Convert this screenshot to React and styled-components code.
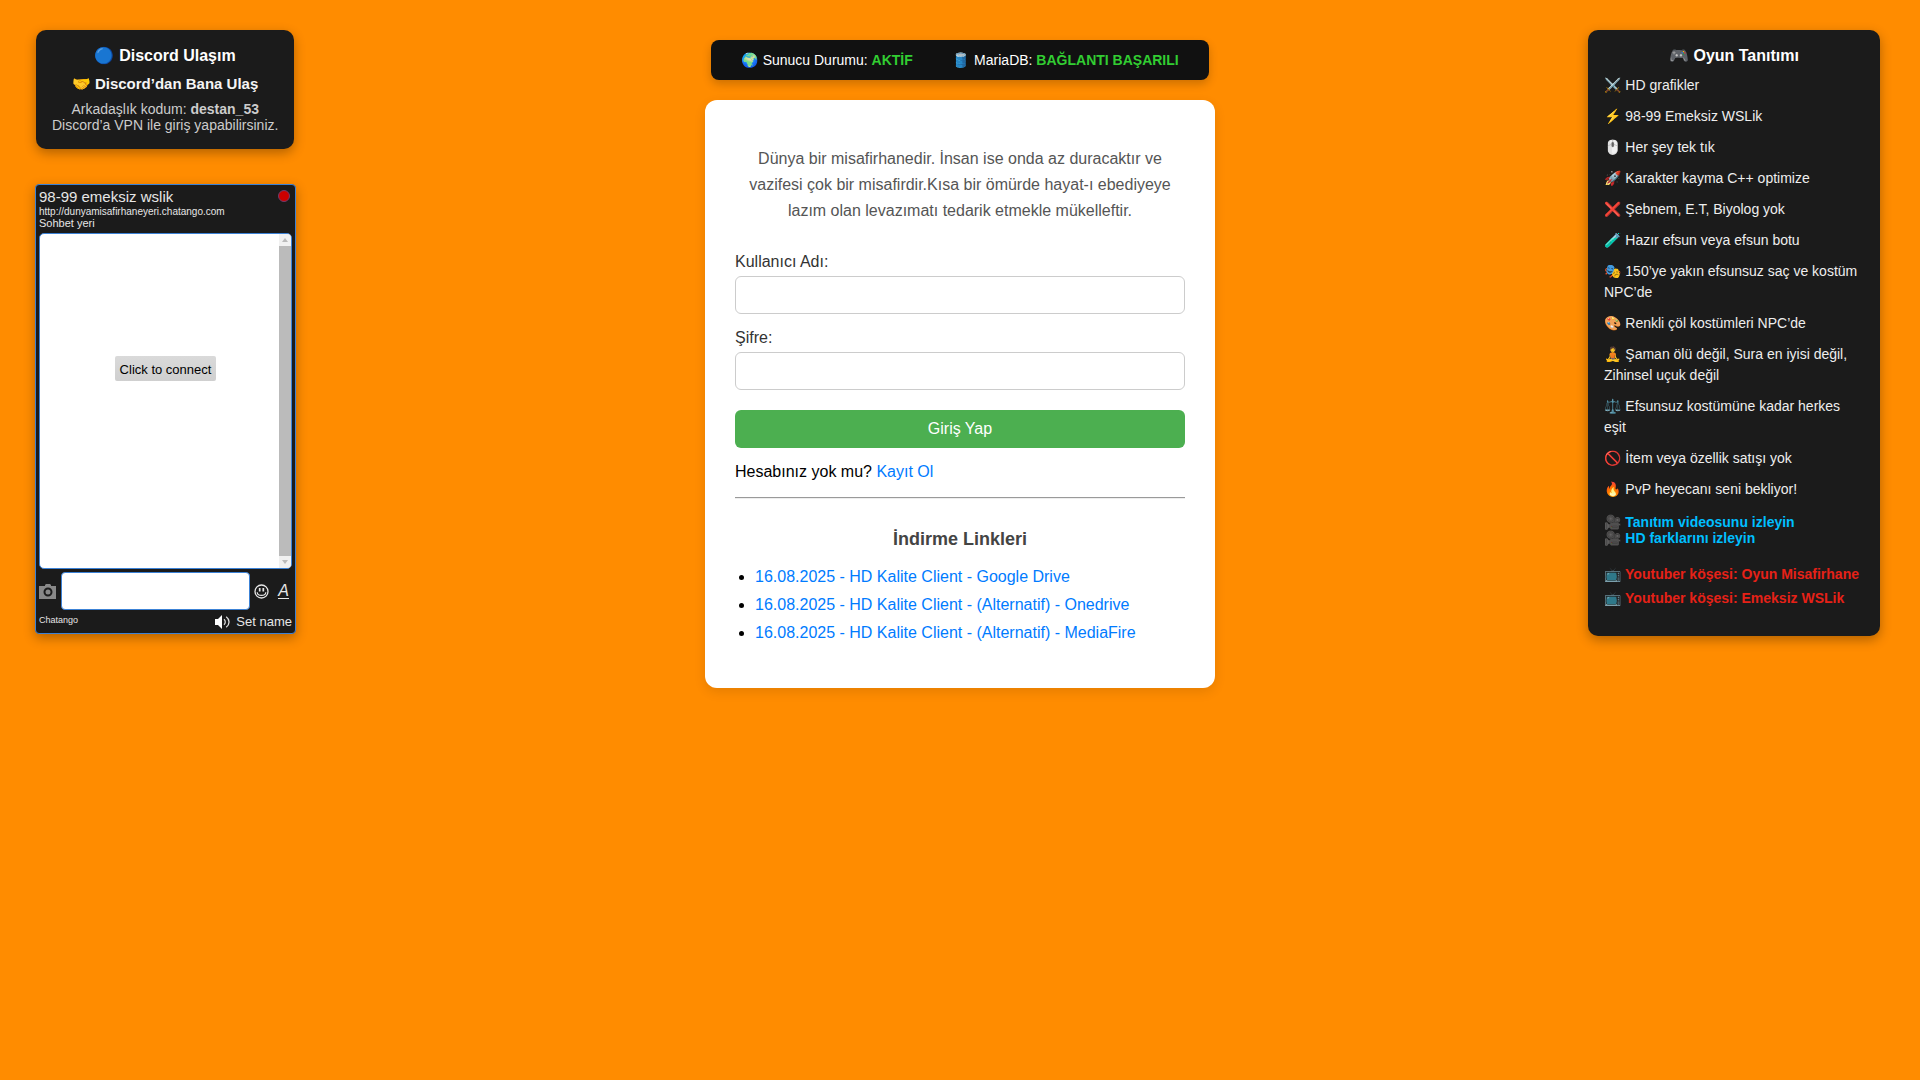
import React from 'react';
import styled, { createGlobalStyle } from 'styled-components';

const GlobalStyle = createGlobalStyle`
  *, *::before, *::after { box-sizing: border-box; }
  body {
    margin: 0;
    background: #ff8c00;
    color: #000;
    font-family: Arial, "Liberation Sans", "Noto Color Emoji", sans-serif;
    font-size: 16px;
    line-height: 18px;
  }
  h1, h2, h3, p, ul { margin: 0; padding: 0; }
  button, input { font-family: inherit; }
`;

const Page = styled.div`
  display: grid;
  grid-template-columns: 1fr 510px 1fr;
  align-items: start;
  min-height: 100vh;
  padding: 30px 35px;
`;

const LeftColumn = styled.aside`
  display: flex;
  flex-direction: column;
  align-items: flex-start;
  gap: 35px;
`;

const Panel = styled.section`
  padding: 16px;
  border-radius: 10px;
  background: #1b1b1b;
  color: #fff;
  font-size: 14px;
  line-height: 16px;
  box-shadow: 0 4px 12px rgba(0, 0, 0, 0.3);
`;

const PanelTitle = styled.h2`
  margin-bottom: 9px;
  font-size: 16px;
  line-height: 20px;
  text-align: center;
`;

const DiscordPanel = styled(Panel)`
  margin-left: 1px;
  text-align: center;
`;

const PanelSubtitle = styled.h3`
  margin-bottom: 9px;
  color: #f5f5f5;
  font-size: 15px;
  line-height: 17px;
`;

const DiscordText = styled.p`
  color: #ccc;
`;

const GamePanel = styled(Panel)`
  justify-self: end;
  width: 292px;
  margin-right: 5px;
  padding-bottom: 30px;
`;

const FeatureList = styled.ul`
  display: flex;
  flex-direction: column;
  gap: 10px;
  margin-bottom: 14px;
  list-style: none;
  color: #eee;
  line-height: 21px;
`;

const LinkGroup = styled.div`
  display: flex;
  flex-direction: column;
  align-items: flex-start;
  gap: ${({ $gap }) => $gap}px;
  & + & { margin-top: 20px; }
`;

const PanelLink = styled.a`
  color: ${({ $color }) => $color};
  font-weight: bold;
  text-decoration: none;
`;

const Chat = styled.section`
  width: 261px;
  padding: 3px;
  border: 1px solid #3c82d6;
  border-radius: 4px;
  background: #1b1b1b;
  color: #e6e6e6;
  box-shadow: 0 4px 12px rgba(0, 0, 0, 0.3);
`;

const ChatHeader = styled.header`
  display: flex;
  justify-content: space-between;
  height: 45px;
`;

const ChatTitle = styled.h2`
  font-size: 15px;
  font-weight: normal;
  line-height: 18px;
`;

const ChatUrl = styled.a`
  display: block;
  color: inherit;
  font-size: 10px;
  line-height: 12px;
  text-decoration: none;
`;

const ChatNote = styled.p`
  font-size: 11px;
  line-height: 11px;
`;

const CloseButton = styled.button`
  width: 12px;
  height: 12px;
  margin-top: 2px;
  margin-right: 2px;
  padding: 0;
  border: 1px solid #6b3d6d;
  border-radius: 50%;
  background: #c00;
`;

const Messages = styled.div`
  display: grid;
  grid-template-columns: 12px 1fr 12px;
  justify-items: center;
  align-items: start;
  height: 336px;
  overflow: hidden;
  border: 1px solid #3c82d6;
  border-radius: 5px;
  background: #fff;
`;

const ConnectButton = styled.button`
  grid-column: 2;
  margin-top: 122px;
  padding: 5px 5px 3px;
  border: 0;
  border-radius: 2px;
  background: linear-gradient(#dadada, #cfcfcf);
  color: #000;
  font-size: 13px;
  line-height: 17px;
`;

const Scrollbar = styled.div`
  display: flex;
  flex-direction: column;
  justify-content: space-between;
  align-self: stretch;
  width: 12px;
  background: #bbb;
`;

const ScrollButton = styled.button`
  display: grid;
  place-items: center;
  width: 12px;
  height: 12px;
  padding: 0;
  border: 0;
  background: #f1f1f1;
`;

const ChatEntry = styled.div`
  display: flex;
  align-items: center;
  height: 38px;
  margin-top: 3px;
`;

const IconButton = styled.button`
  display: flex;
  flex: none;
  padding: 0;
  border: 0;
  background: none;
  color: #e6e6e6;
`;

const StyleButton = styled(IconButton)`
  border-bottom: 1px solid #e6e6e6;
  font-size: 16px;
  font-style: italic;
  line-height: 14px;
`;

const MessageInput = styled.input`
  flex: 1;
  min-width: 0;
  height: 38px;
  margin: 0 4px 0 5px;
  border: 1px solid #3c82d6;
  border-radius: 4px;
  background: #fff;
`;

const ChatTools = styled.div`
  display: flex;
  align-items: center;
  gap: 9px;
  padding-right: 3px;
`;

const ChatFooter = styled.footer`
  display: flex;
  justify-content: space-between;
  padding-top: 3px;
`;

const Brand = styled.a`
  padding-top: 1px;
  color: inherit;
  font-size: 9px;
  line-height: 12px;
  text-decoration: none;
`;

const FooterTools = styled.div`
  display: flex;
  align-items: center;
  gap: 5px;
`;

const NameButton = styled.button`
  padding: 0;
  border: 0;
  background: none;
  color: inherit;
  font-size: 13px;
  line-height: 17px;
`;

const Main = styled.main`
  display: flex;
  flex-direction: column;
  align-items: center;
  gap: 20px;
  padding-top: 10px;
`;

const StatusBar = styled.div`
  display: flex;
  gap: 40px;
  padding: 12px 30px;
  border-radius: 8px;
  background: #111;
  color: #fff;
  font-size: 14px;
  line-height: 16px;
  white-space: nowrap;
  box-shadow: 0 4px 10px rgba(0, 0, 0, 0.2);
`;

const StatusValue = styled.strong`
  color: #32cd32;
`;

const Card = styled.section`
  align-self: stretch;
  padding: 46px 30px;
  border-radius: 12px;
  background: #fff;
  box-shadow: 0 4px 12px rgba(0, 0, 0, 0.1);
`;

const Quote = styled.p`
  margin-bottom: 29px;
  color: #555;
  line-height: 26px;
  text-align: center;
`;

const Field = styled.div`
  margin-bottom: 15px;
`;

const Label = styled.label`
  display: block;
  margin-bottom: 5px;
  color: #333;
`;

const TextInput = styled.input`
  display: block;
  width: 100%;
  height: 38px;
  padding: 10px;
  border: 1px solid #ccc;
  border-radius: 6px;
  background: #fff;
  font-size: 16px;
`;

const SubmitButton = styled.button`
  display: block;
  width: 100%;
  margin-top: 20px;
  margin-bottom: 15px;
  padding: 10px;
  border: 0;
  border-radius: 6px;
  background: #4caf50;
  color: #fff;
  font-size: 16px;
  line-height: 18px;
`;

const TextLink = styled.a`
  color: #007bff;
  text-decoration: none;
`;

const Divider = styled.hr`
  margin: 16px 0 30px;
  border: 0;
  border-top: 1px solid #9a9a9a;
  border-bottom: 1px solid #eee;
`;

const DownloadTitle = styled.h3`
  margin-bottom: 19px;
  color: #444;
  font-size: 18px;
  line-height: 20px;
  text-align: center;
`;

const DownloadList = styled.ul`
  display: flex;
  flex-direction: column;
  gap: 10px;
  padding-left: 20px;
`;

const features = [
  '⚔️ HD grafikler',
  '⚡ 98-99 Emeksiz WSLik',
  '🖱️ Her şey tek tık',
  '🚀 Karakter kayma C++ optimize',
  '❌ Şebnem, E.T, Biyolog yok',
  '🧪 Hazır efsun veya efsun botu',
  '🎭 150’ye yakın efsunsuz saç ve kostüm NPC’de',
  '🎨 Renkli çöl kostümleri NPC’de',
  '🧘 Şaman ölü değil, Sura en iyisi değil, Zihinsel uçuk değil',
  '⚖️ Efsunsuz kostümüne kadar herkes eşit',
  '🚫 İtem veya özellik satışı yok',
  '🔥 PvP heyecanı seni bekliyor!',
];

const videos = ['🎥 Tanıtım videosunu izleyin', '🎥 HD farklarını izleyin'];
const channels = ['📺 Youtuber köşesi: Oyun Misafirhane', '📺 Youtuber köşesi: Emeksiz WSLik'];

const downloads = [
  '16.08.2025 - HD Kalite Client - Google Drive',
  '16.08.2025 - HD Kalite Client - (Alternatif) - Onedrive',
  '16.08.2025 - HD Kalite Client - (Alternatif) - MediaFire',
];

const CameraIcon = () => (
  <svg width="17" height="15" viewBox="0 0 17 15" aria-hidden="true">
    <path d="M0 2h6V1l1-1h4l1 1v1h5v13H0z" fill="#888" />
    <circle cx="9" cy="8" r="3.5" fill="none" stroke="#1b1b1b" strokeWidth="2" />
  </svg>
);

const SmileIcon = () => (
  <svg width="15" height="15" viewBox="0 0 15 15" fill="none" stroke="currentColor" aria-hidden="true">
    <circle cx="7.5" cy="7.5" r="6.5" strokeWidth="1.3" />
    <path d="M5.7 4v3.6M9.3 4v3.6" strokeWidth="1.7" />
    <path d="M3.2 8.2c.3 4.3 8.3 4.3 8.6 0" strokeWidth="1.2" />
  </svg>
);

const SpeakerIcon = () => (
  <svg width="16" height="14" viewBox="0 0 16 14" aria-hidden="true">
    <path d="M0 4h3l4-4v14l-4-4H0z" fill="#fff" />
    <path d="M9 4.2c1.7 1.4 1.7 4.2 0 5.6M11.2 1.8c3.8 2.8 3.8 7.6 0 10.4" fill="none" stroke="#ddd" strokeWidth="1.3" />
  </svg>
);

const Arrow = ({ d }) => (
  <svg width="6" height="4" viewBox="0 0 6 4" aria-hidden="true">
    <path d={d} fill="#bbb" />
  </svg>
);

export default function App() {
  return (
    <>
      <GlobalStyle />
      <Page>
        <LeftColumn>
          <DiscordPanel>
            <PanelTitle>🔵 Discord Ulaşım</PanelTitle>
            <PanelSubtitle>🤝 Discord’dan Bana Ulaş</PanelSubtitle>
            <DiscordText>
              Arkadaşlık kodum: <strong>destan_53</strong>
              <br />
              Discord’a VPN ile giriş yapabilirsiniz.
            </DiscordText>
          </DiscordPanel>
          <Chat>
            <ChatHeader>
              <div>
                <ChatTitle>98-99 emeksiz wslik</ChatTitle>
                <ChatUrl href="#chat">http://dunyamisafirhaneyeri.chatango.com</ChatUrl>
                <ChatNote>Sohbet yeri</ChatNote>
              </div>
              <CloseButton type="button" aria-label="Kapat" />
            </ChatHeader>
            <Messages>
              <ConnectButton type="button">Click to connect</ConnectButton>
              <Scrollbar>
                <ScrollButton type="button" aria-label="Yukarı"><Arrow d="M0 4l3-4 3 4z" /></ScrollButton>
                <ScrollButton type="button" aria-label="Aşağı"><Arrow d="M0 0h6L3 4z" /></ScrollButton>
              </Scrollbar>
            </Messages>
            <ChatEntry>
              <IconButton type="button" aria-label="Resim"><CameraIcon /></IconButton>
              <MessageInput type="text" aria-label="Mesaj" />
              <ChatTools>
                <IconButton type="button" aria-label="İfade"><SmileIcon /></IconButton>
                <StyleButton type="button">A</StyleButton>
              </ChatTools>
            </ChatEntry>
            <ChatFooter>
              <Brand href="#chatango">Chatango</Brand>
              <FooterTools>
                <IconButton type="button" aria-label="Ses"><SpeakerIcon /></IconButton>
                <NameButton type="button">Set name</NameButton>
              </FooterTools>
            </ChatFooter>
          </Chat>
        </LeftColumn>

        <Main>
          <StatusBar>
            <span>🌍 Sunucu Durumu: <StatusValue>AKTİF</StatusValue></span>
            <span>🛢️ MariaDB: <StatusValue>BAĞLANTI BAŞARILI</StatusValue></span>
          </StatusBar>
          <Card>
            <Quote>
              Dünya bir misafirhanedir. İnsan ise onda az duracaktır ve vazifesi çok bir
              misafirdir.Kısa bir ömürde hayat-ı ebediyeye lazım olan levazımatı tedarik
              etmekle mükelleftir.
            </Quote>
            <form>
              <Field>
                <Label htmlFor="username">Kullanıcı Adı:</Label>
                <TextInput id="username" type="text" />
              </Field>
              <Field>
                <Label htmlFor="password">Şifre:</Label>
                <TextInput id="password" type="password" />
              </Field>
              <SubmitButton type="submit">Giriş Yap</SubmitButton>
            </form>
            <p>Hesabınız yok mu? <TextLink href="#register">Kayıt Ol</TextLink></p>
            <Divider />
            <DownloadTitle>İndirme Linkleri</DownloadTitle>
            <DownloadList>
              {downloads.map((name) => (
                <li key={name}><TextLink href="#download">{name}</TextLink></li>
              ))}
            </DownloadList>
          </Card>
        </Main>

        <GamePanel>
          <PanelTitle>🎮 Oyun Tanıtımı</PanelTitle>
          <FeatureList>
            {features.map((text) => <li key={text}>{text}</li>)}
          </FeatureList>
          <LinkGroup $gap={0}>
            {videos.map((text) => <PanelLink key={text} href="#video" $color="#00bfff">{text}</PanelLink>)}
          </LinkGroup>
          <LinkGroup $gap={8}>
            {channels.map((text) => <PanelLink key={text} href="#channel" $color="#e62117">{text}</PanelLink>)}
          </LinkGroup>
        </GamePanel>
      </Page>
    </>
  );
}
